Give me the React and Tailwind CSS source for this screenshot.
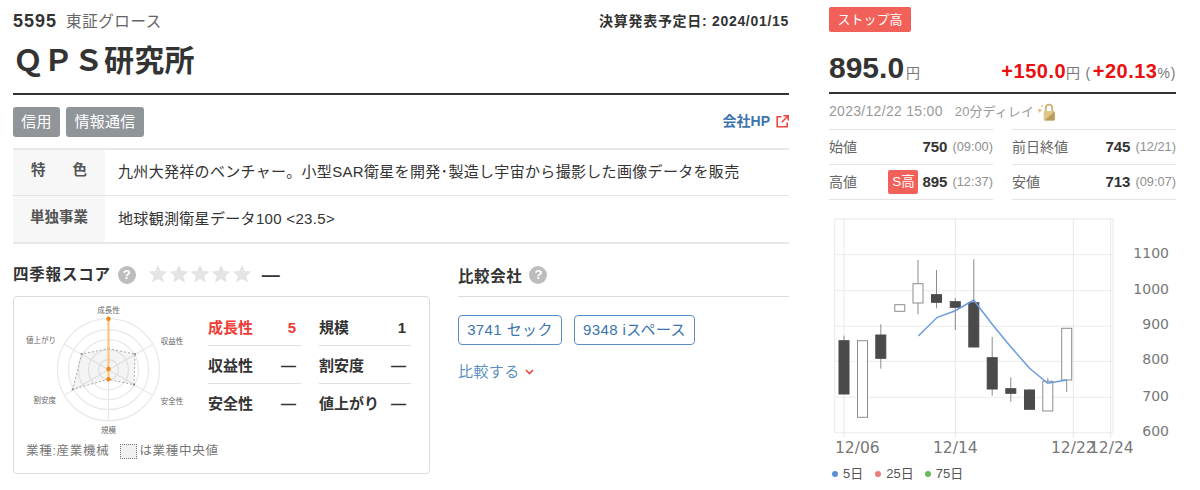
const FONT = '"Liberation Sans", "Noto Sans CJK JP", sans-serif';

const SCORES = [
  [{ label: '成長性', value: '5', hot: true }, { label: '規模', value: '1' }],
  [{ label: '収益性', value: '—' }, { label: '割安度', value: '—' }],
  [{ label: '安全性', value: '—' }, { label: '値上がり', value: '—' }],
];

// [center x, wick top, wick bottom, body top, body bottom, filled]
const CANDLES = [
  [844, 335.7, 340.7, 340.7, 394, true],
  [862.5, 340.7, 340.7, 340.7, 417.3, false],
  [880.8, 324.3, 368.7, 335, 358.3, true],
  [899.8, 304.7, 304.7, 304.7, 311.3, false],
  [918, 260, 314.3, 283.7, 303, false],
  [936.5, 270, 308.3, 294.7, 302.3, true],
  [955.3, 298, 330, 301.7, 307.3, true],
  [973.8, 259.3, 347, 302.7, 347, true],
  [992.2, 337, 395.7, 357.7, 389, true],
  [1010.8, 377.3, 401.7, 388.7, 393.3, true],
  [1029.5, 389.3, 390, 390, 409.3, true],
  [1047.8, 378, 381.3, 381.3, 411, false],
  [1066.7, 328.3, 392, 328.3, 380, false],
];

const GRID_Y = [219, 254.7, 290.7, 326.3, 361.3, 397.3, 432.7];
const GRID_X = [844, 955.3, 1073.3, 1110.7];
const PRICE_LABELS = [[1100, 258], [1000, 294], [900, 329], [800, 364], [700, 401], [600, 436]];
const DATE_LABELS = [[835, '12/06'], [933, '12/14'], [1051, '12/22'], [1089, '12/24']];
const MA5 = '918.3,336 937.3,317.3 955.3,310.7 973.7,300 992,324 1010,346 1029.3,368 1047.7,383.3 1066.7,380';
const MEDIAN = [[94.3, 51.7], [121, 57], [120, 87.7], [94.3, 82.3], [58.7, 92.3], [67.7, 57]];

function HelpIcon() {
  return (
    <span className="flex h-[18px] w-[18px] items-center justify-center rounded-full bg-[#bdbdbd] text-[13px] font-bold text-white">?</span>
  );
}

function Star() {
  return (
    <svg width="20" height="20" viewBox="0 0 20 20">
      <path d="M10 .8l2.7 6.2 6.7.6-5.1 4.4 1.6 6.6L10 15.1l-5.9 3.5 1.6-6.6L.6 7.6 7.3 7z" fill="#e4e4e4" />
    </svg>
  );
}

function RadarChart() {
  const cx = 94.5;
  const cy = 72.7;
  const labels = [
    [cx, 16, '成長性'],
    [158, 46.7, '収益性'],
    [158, 106.7, '安全性'],
    [cx, 136, '規模'],
    [30.7, 105.7, '割安度'],
    [27, 45.7, '値上がり'],
  ];
  return (
    <svg width="190" height="140" viewBox="0 0 190 140" className="shrink-0">
      {[10, 20, 30, 40, 51].map(r => (
        <circle key={r} cx={cx} cy={cy} r={r} fill="none" stroke="#e8e8e8" strokeWidth="1.2" />
      ))}
      <path d="M94.5 21.7v102M50.3 47.2l88.4 51M50.3 98.2l88.4-51" stroke="#e8e8e8" strokeWidth="1.2" />
      <polygon
        points={MEDIAN.map(p => p.join(',')).join(' ')}
        fill="#8f8f8f"
        fillOpacity="0.1"
        stroke="#a0a0a0"
        strokeWidth="0.9"
        strokeDasharray="2 2"
      />
      {MEDIAN.map(([x, y]) => <circle key={x} cx={x} cy={y} r="1.1" fill="#8c8c8c" />)}
      <path d="M94.5 21.7V82.3" stroke="#f8c67c" strokeWidth="2.2" />
      <circle cx={cx} cy="21.7" r="2.2" fill="#ee8a16" />
      <circle cx={cx} cy="72" r="2.2" fill="#ee8a16" />
      <circle cx={cx} cy="82.3" r="2.2" fill="#ee8a16" />
      {labels.map(([x, y, t]) => (
        <text key={t} x={x} y={y} textAnchor="middle" fontSize="7.5" fill="#666" fontFamily={FONT}>{t}</text>
      ))}
    </svg>
  );
}

function CandleChart() {
  return (
    <svg width="347" height="246" viewBox="829 213 347 246" className="block" fontFamily='"DejaVu Sans", sans-serif'>
      {GRID_Y.map(y => <line key={y} x1="834.5" x2="1113" y1={y} y2={y} stroke="#efefef" strokeWidth="1.3" />)}
      {GRID_X.map(x => <line key={x} x1={x} x2={x} y1="219" y2="438" stroke="#e6e8ef" strokeWidth="1" />)}
      <line x1="834.7" x2="834.7" y1="219" y2="432.7" stroke="#ededed" strokeWidth="1.2" />
      <line x1="1113" x2="1113" y1="219" y2="432.7" stroke="#ededed" strokeWidth="1.2" />
      {CANDLES.map(([x, wt, wb, bt, bb, filled]) => (
        <g key={x}>
          <line x1={x} x2={x} y1={wt} y2={wb} stroke="#8c8c8c" strokeWidth="1" />
          <rect
            x={x - 5}
            y={bt}
            width="10"
            height={bb - bt}
            fill={filled ? '#4a4a4a' : '#fff'}
            stroke={filled ? '#4a4a4a' : '#8c8c8c'}
            strokeWidth="1"
          />
        </g>
      ))}
      <polyline points={MA5} fill="none" stroke="#6a9be0" strokeWidth="1.5" />
      {PRICE_LABELS.map(([v, y]) => (
        <text key={v} x="1169" y={y} textAnchor="end" fontSize="14" fill="#777">{v}</text>
      ))}
      {DATE_LABELS.map(([x, t]) => (
        <text key={t} x={x} y="453" fontSize="15.5" fill="#777">{t}</text>
      ))}
    </svg>
  );
}

function LockIcon() {
  return (
    <svg width="18" height="18" viewBox="0 0 18 18" className="ml-[3px]">
      <path d="M8.7 8.5V5a3.3 3.3 0 0 1 6.6 0V8.5" fill="none" stroke="#cdab68" strokeWidth="1.7" />
      <rect x="6.7" y="8" width="11" height="9.5" rx="1.2" fill="#e0c48c" />
      <path d="M17.7 8.5V16.3a1.2 1.2 0 0 1-1.2 1.2H7.5z" fill="#bb9a5c" />
      <path d="M2.8 5l.7 1.8 1.8.7-1.8.7-.7 1.8-.7-1.8-1.8-.7 1.8-.7zM5 1.5l.4 1.1 1.1.4-1.1.4L5 4.5l-.4-1.1L3.500 3l1.100-.4z" fill="#d9b56e" />
    </svg>
  );
}

function QuoteRow({ label, badge, value, time }) {
  return (
    <div className="flex h-[35px] items-center border-b border-[#e4e4e4] text-[14px] text-[#666]">
      <span className="mr-auto">{label}</span>
      {badge && (
        <span className="mr-[4px] flex h-[24px] w-[30px] items-center justify-center rounded-[2px] bg-[#f2605a] text-[13.5px] text-white">{badge}</span>
      )}
      <span className="mr-[5px] text-[15px] font-bold text-[#333]">{value}</span>
      <span className="text-[12.8px] text-[#8f8f8f]">{time}</span>
    </div>
  );
}

export default function App() {
  return (
    <div className="flex h-[490px] w-[1200px] overflow-hidden bg-white pl-[13px] text-[#333]" style={{ fontFamily: FONT }}>
      {/* Left column */}
      <div className="w-[776px] shrink-0">
        <div className="flex h-[42px] items-center justify-between">
          <div className="flex items-baseline gap-[9px]">
            <span className="text-[18px] font-bold tracking-[1px]">5595</span>
            <span className="text-[15.5px] tracking-[0.6px] text-[#666]">東証グロース</span>
          </div>
          <span className="text-[14px] font-bold tracking-[0.7px]">決算発表予定日: 2024/01/15</span>
        </div>
        <div className="flex h-[53px] items-start border-b-2 border-[#333]">
          <h1 className="text-[30px] leading-[37px] font-bold tracking-[0.3px]">ＱＰＳ研究所</h1>
        </div>

        <div className="flex h-[53px] items-start justify-between pt-[12px]">
          <div className="flex gap-[6px]">
            <span className="flex h-[30px] w-[47px] items-center justify-center rounded-[3px] bg-[#90959a] text-[15px] tracking-[0.3px] text-white">信用</span>
            <span className="flex h-[30px] w-[78px] items-center justify-center rounded-[3px] bg-[#90959a] text-[15px] tracking-[0.3px] text-white">情報通信</span>
          </div>
          <div className="flex items-center gap-[6px] pt-[4px] text-[14px] font-bold text-[#3d74ad]">
            会社HP
            <svg width="13" height="13" viewBox="0 0 13 13" fill="none" stroke="#ee4540" strokeWidth="1.6">
              <path d="M5.5 1.8H1.2v10h10V7.5M7.5.8h4.7v4.7M12 1L5.8 7.2" />
            </svg>
          </div>
        </div>

        <div className="border-t-2 border-b-2 border-[#e8e8e8]">
          <div className="flex h-[46px] border-b border-[#e4e4e4]">
            <div className="flex w-[92px] shrink-0 items-center justify-between bg-[#f7f7f7] px-[18px] pb-[3px] text-[14.5px] font-bold text-[#555]">
              <span>特</span><span>色</span>
            </div>
            <div className="flex items-center pl-[13px] text-[15px] tracking-[0.32px]">九州大発祥のベンチャー。小型SAR衛星を開発･製造し宇宙から撮影した画像データを販売</div>
          </div>
          <div className="flex h-[46px]">
            <div className="flex w-[92px] shrink-0 items-center justify-center bg-[#f7f7f7] pb-[3px] text-[14.5px] font-bold text-[#555]">単独事業</div>
            <div className="flex items-center pl-[13px] text-[15px] tracking-[0.32px]">地球観測衛星データ100 &lt;23.5&gt;</div>
          </div>
        </div>

        <div className="flex pt-[20px]">
          {/* Shikiho score */}
          <div className="w-[417px] shrink-0">
            <div className="flex h-[22px] items-center">
              <span className="text-[15.5px] font-bold tracking-[0.8px]">四季報スコア</span>
              <span className="ml-[7px]"><HelpIcon /></span>
              <div className="ml-[12px] flex gap-[1px] pb-[2px]">
                {[1, 2, 3, 4, 5].map(i => <Star key={i} />)}
              </div>
              <span className="ml-[10px] text-[18px] font-bold">—</span>
            </div>
            <div className="mt-[10px] h-[178px] rounded-[4px] border border-[#dcdcdc]">
              <div className="flex h-[140px]">
                <RadarChart />
                <div className="ml-[4px] w-[203px] pt-[11px]">
                  {SCORES.map((row, r) => (
                    <div key={r} className="grid grid-cols-[93px_92px] gap-x-[18px]">
                      {row.map(s => (
                        <div
                          key={s.label}
                          className={`flex h-[38px] items-center justify-between pt-[3px] pr-[5px] text-[15px] font-bold ${r < 2 ? 'border-b border-[#e0e0e0]' : ''} ${s.hot ? 'text-[#f03c36]' : ''}`}
                        >
                          <span>{s.label}</span>
                          <span>{s.value}</span>
                        </div>
                      ))}
                    </div>
                  ))}
                </div>
              </div>
              <div className="flex items-center pl-[12px] pt-[5px] text-[12.5px] tracking-[0.7px] text-[#777]">
                <span>業種:産業機械</span>
                <span className="ml-[11px] mr-[2px] h-[15px] w-[17px] border border-dotted border-[#777] bg-[#f0f0f0]" />
                <span>は業種中央値</span>
              </div>
            </div>
          </div>

          {/* Peers */}
          <div className="ml-[28px] flex-1">
            <div className="flex h-[33px] items-start gap-[7px] border-b border-[#dcdcdc] pt-[1px]">
              <span className="text-[15.5px] font-bold tracking-[0.6px]">比較会社</span>
              <span className="pt-[1px]"><HelpIcon /></span>
            </div>
            <div className="mt-[18px] flex gap-[12px]">
              <span className="flex h-[30px] w-[104px] items-center justify-center rounded-[4px] border-[1.5px] border-[#5b8fc4] text-[15px] tracking-[0.4px] text-[#3d74ad]">3741 セック</span>
              <span className="flex h-[30px] w-[121px] items-center justify-center rounded-[4px] border-[1.5px] border-[#5b8fc4] text-[15px] tracking-[0.4px] text-[#3d74ad]">9348 iスペース</span>
            </div>
            <div className="mt-[16px] flex items-center gap-[5px] text-[15px] tracking-[0.4px] text-[#5b8fc4]">
              比較する
              <svg width="9" height="6" viewBox="0 0 9 6" fill="none" stroke="#ee4540" strokeWidth="1.6"><path d="M1 1l3.5 3.5L8 1" /></svg>
            </div>
          </div>
        </div>
      </div>

      {/* Right column */}
      <div className="ml-[40px] w-[347px] shrink-0">
        <div className="pt-[7px]">
          <span className="flex h-[25px] w-[82px] items-center justify-center rounded-[2px] bg-[#f2605a] text-[13px] text-white">ストップ高</span>
        </div>
        <div className="flex h-[62px] items-baseline justify-between border-b-2 border-[#333] pt-[18px]">
          <div>
            <span className="text-[30px] leading-[36px] font-bold">895.0</span>
            <span className="ml-[2px] text-[14px] text-[#777]">円</span>
          </div>
          <div className="text-[14px] tracking-[0.7px] text-[#777]">
            <span className="text-[20px] font-bold tracking-[0.5px] text-[#ea1010]">+150.0</span>
            <span className="mr-[2px]">円 (</span>
            <span className="text-[20px] font-bold tracking-[0.5px] text-[#ea1010]">+20.13</span>
            <span>%)</span>
          </div>
        </div>
        <div className="flex h-[35px] items-center text-[14px] tracking-[0.3px] text-[#999]">
          <span>2023/12/22 15:00</span>
          <span className="ml-[12px] text-[13px] tracking-[0.1px]">20分ディレイ</span>
          <LockIcon />
        </div>
        <div className="grid grid-cols-[164px_164px] gap-x-[19px]">
          <div className="border-t border-[#e4e4e4]">
            <QuoteRow label="始値" value="750" time="(09:00)" />
            <QuoteRow label="高値" badge="S高" value="895" time="(12:37)" />
          </div>
          <div className="border-t border-[#e4e4e4]">
            <QuoteRow label="前日終値" value="745" time="(12/21)" />
            <QuoteRow label="安値" value="713" time="(09:07)" />
          </div>
        </div>
        <div className="pt-[13px]">
          <CandleChart />
        </div>
        <div className="mt-[5px] flex items-center pl-[3px] text-[13px] text-[#555]">
          <span className="mr-[5px] h-[6px] w-[6px] rounded-full bg-[#5b8fd9]" />
          <span className="mr-[12px]">5日</span>
          <span className="mr-[5px] h-[6px] w-[6px] rounded-full bg-[#ee7b7b]" />
          <span className="mr-[11px]">25日</span>
          <span className="mr-[5px] h-[6px] w-[6px] rounded-full bg-[#66bb55]" />
          <span>75日</span>
        </div>
      </div>
    </div>
  );
}
